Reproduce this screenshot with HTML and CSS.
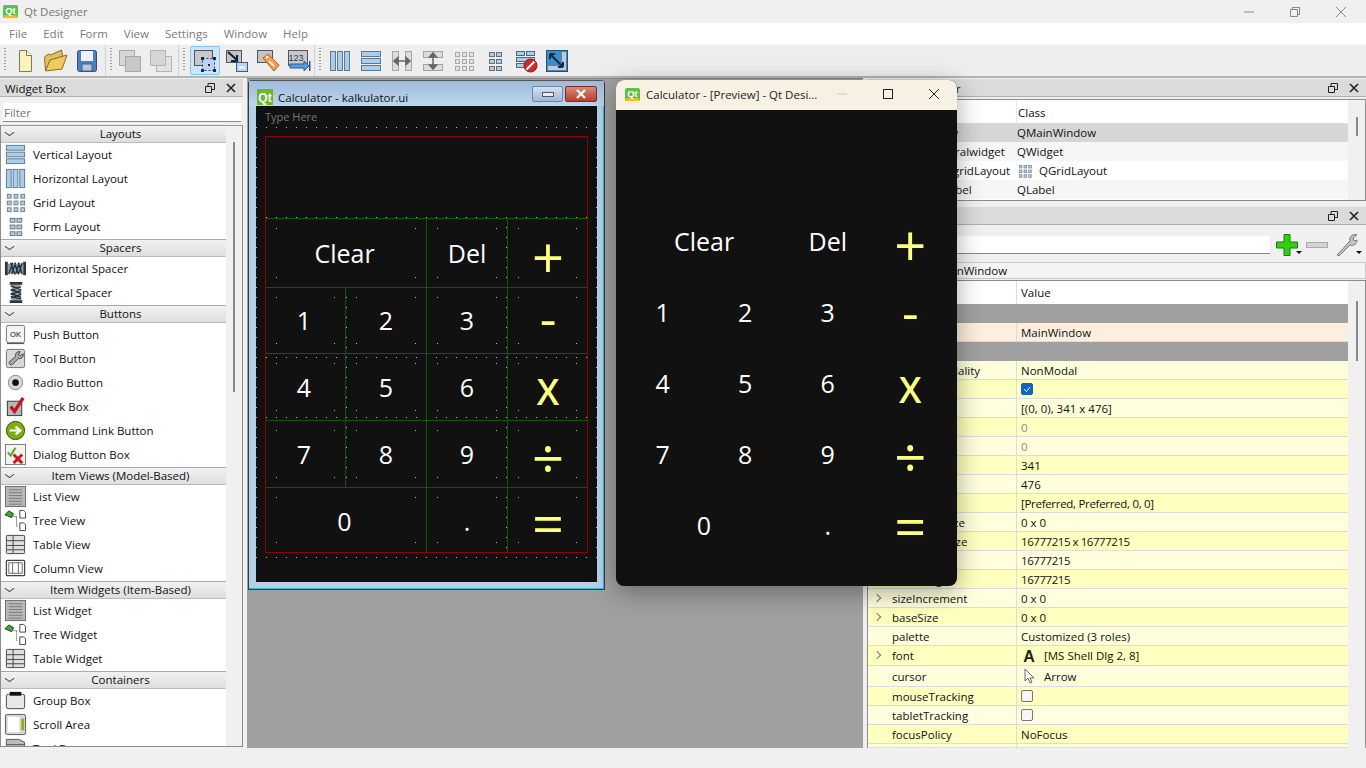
FILE: index.html
```html
<!DOCTYPE html>
<html lang="en">
<head>
  <meta charset="UTF-8">
  <title>Qt Designer</title>
  <link rel="stylesheet" href="styles.css">
</head>
<body>
<svg class="defs" width="0" height="0">
  <defs>
    <symbol id="i-qt" viewBox="0 0 16 16"><rect x="0" y="1" width="16" height="14" rx="2" fill="#5cc04a"/><rect x="1" y="12" width="14" height="3" fill="#f2c21a"/><text x="8" y="10.500" font-size="10" font-weight="bold" text-anchor="middle" fill="#fff" font-family="Liberation Sans">Qt</text></symbol>
    <symbol id="i-vbox" viewBox="0 0 24 24"><g fill="#a9cdea" stroke="#5d7890"><rect x="2.500" y="2.500" width="19" height="5"/><rect x="2.500" y="9.500" width="19" height="5"/><rect x="2.500" y="16.500" width="19" height="5"/></g></symbol>
    <symbol id="i-hbox" viewBox="0 0 24 24"><g fill="#a9cdea" stroke="#5d7890"><rect x="2.500" y="2.500" width="5" height="19"/><rect x="9.500" y="2.500" width="5" height="19"/><rect x="16.500" y="2.500" width="5" height="19"/></g></symbol>
    <symbol id="i-grid" viewBox="0 0 24 24"><g fill="#b6cadc" stroke="#6c8296"><rect x="3.500" y="3.500" width="4" height="4"/><rect x="10.500" y="3.500" width="4" height="4"/><rect x="17.500" y="3.500" width="4" height="4"/><rect x="3.500" y="10.500" width="4" height="4"/><rect x="10.500" y="10.500" width="4" height="4"/><rect x="17.500" y="10.500" width="4" height="4"/><rect x="3.500" y="17.500" width="4" height="4"/><rect x="10.500" y="17.500" width="4" height="4"/><rect x="17.500" y="17.500" width="4" height="4"/></g></symbol>
    <symbol id="i-grid-off" viewBox="0 0 24 24"><g fill="#e4e4e4" stroke="#a8a8a8"><rect x="3.500" y="3.500" width="4" height="4"/><rect x="10.500" y="3.500" width="4" height="4"/><rect x="17.500" y="3.500" width="4" height="4"/><rect x="3.500" y="10.500" width="4" height="4"/><rect x="10.500" y="10.500" width="4" height="4"/><rect x="17.500" y="10.500" width="4" height="4"/><rect x="3.500" y="17.500" width="4" height="4"/><rect x="10.500" y="17.500" width="4" height="4"/><rect x="17.500" y="17.500" width="4" height="4"/></g></symbol>
    <symbol id="i-form" viewBox="0 0 24 24"><g fill="#b6cadc" stroke="#5c7388"><rect x="6.500" y="3.500" width="5" height="4"/><rect x="13.500" y="3.500" width="5" height="4"/><rect x="6.500" y="10.500" width="5" height="4"/><rect x="13.500" y="10.500" width="5" height="4"/><rect x="6.500" y="17.500" width="5" height="4"/><rect x="13.500" y="17.500" width="5" height="4"/></g></symbol>
    <symbol id="i-hsplit" viewBox="0 0 24 24"><g fill="#dcdcdc" stroke="#a5a5a5"><rect x="2.500" y="2.500" width="6" height="19"/><rect x="15.500" y="2.500" width="6" height="19"/></g><path d="M5 12h14M8 8.500 4 12l4 3.500zM16 8.500l4 3.500-4 3.500z" fill="#666" stroke="#666" stroke-width="1.500"/></symbol>
    <symbol id="i-vsplit" viewBox="0 0 24 24"><g fill="#dcdcdc" stroke="#a5a5a5"><rect x="2.500" y="2.500" width="19" height="6"/><rect x="2.500" y="15.500" width="19" height="6"/></g><path d="M12 5v14M8.500 8 12 4l3.500 4zM8.500 16l3.500 4 3.500-4z" fill="#666" stroke="#666" stroke-width="1.500"/></symbol>
    <symbol id="i-break" viewBox="0 0 24 24"><g fill="#a9cdea" stroke="#50667c"><rect x="2.500" y="2.500" width="8" height="4"/><rect x="12.500" y="2.500" width="8" height="4"/><rect x="2.500" y="8.500" width="18" height="4"/><rect x="2.500" y="14.500" width="8" height="4"/></g><circle cx="16.500" cy="16.500" r="6.500" fill="#d32a2a" stroke="#8a1a1a"/><path d="M12.500 20.500 20.500 12.500" stroke="#fff" stroke-width="2"/></symbol>
    <symbol id="i-adjust" viewBox="0 0 24 24"><rect x="1.500" y="1.500" width="21" height="21" fill="#3d8dc4" stroke="#19557e"/><rect x="17" y="3" width="4" height="18" fill="#c8c8c8"/><rect x="3" y="17" width="18" height="4" fill="#c8c8c8"/><path d="M5 5 18 18M5 5v5M5 5h5M18 18v-5M18 18h-5" stroke="#0c2c50" stroke-width="2" fill="none"/></symbol>
    <symbol id="i-new" viewBox="0 0 24 24"><path d="M6.500 1.500h7l5 5v16h-12z" fill="#fdf3b8" stroke="#7a7a6a"/><path d="M13.500 1.500v5h5" fill="#fff" stroke="#7a7a6a"/></symbol>
    <symbol id="i-open" viewBox="0 0 24 24"><path d="M1.500 21 .5 8l4-3 2 1 11-5 1 6z" fill="#e5bf5a" stroke="#8a6a20"/><path d="M1.500 22 6 11l17-5-5 14z" fill="#f0cc60" stroke="#8a6a20"/></symbol>
    <symbol id="i-save" viewBox="0 0 24 24"><rect x="2.500" y="1.500" width="19" height="21" rx="2" fill="#4f80c0" stroke="#2f4f80"/><rect x="6" y="2" width="12" height="10" fill="#eef2f6"/><rect x="7" y="15" width="10" height="7" fill="#bcc8d4" stroke="#40608c"/></symbol>
    <symbol id="i-copy-off" viewBox="0 0 24 24"><g fill="#d6d6d6" stroke="#a8a8a8"><rect x="1.500" y="1.500" width="15" height="15"/><rect x="7.500" y="7.500" width="15" height="15" fill="#c8c8c8"/></g></symbol>
    <symbol id="i-copy2-off" viewBox="0 0 24 24"><g fill="#e2e2e2" stroke="#b4b4b4"><rect x="7.500" y="7.500" width="15" height="15"/><rect x="1.500" y="1.500" width="15" height="15" fill="#d6d6d6"/></g></symbol>
    <symbol id="i-edit" viewBox="0 0 24 24"><rect x="1.500" y="1.500" width="18" height="15" fill="#c8c8c8" stroke="#555"/><rect x="9.500" y="9.500" width="12" height="12" fill="#bcd2f2" stroke="#2a3c5c" stroke-dasharray="2 2"/><g fill="#1a2a44"><rect x="8" y="8" width="3" height="3"/><rect x="20" y="8" width="3" height="3"/><rect x="8" y="20" width="3" height="3"/><rect x="20" y="20" width="3" height="3"/><rect x="15" y="15" width="2" height="2"/></g></symbol>
    <symbol id="i-signal" viewBox="0 0 24 24"><rect x="1.500" y="1.500" width="15" height="12" fill="#c4c4c4" stroke="#555"/><rect x="11.500" y="13.500" width="11" height="9" fill="#bcd2f2" stroke="#3c5c84"/><rect x="14" y="17" width="6" height="3" fill="#e8f0f8"/><path d="M3 3 12 11M12 6v6H6" stroke="#12283e" stroke-width="2.200" fill="none"/></symbol>
    <symbol id="i-tab" viewBox="0 0 24 24"><rect x="1.500" y="1.500" width="15" height="12" fill="#c4c4c4" stroke="#555"/><path d="M7 9 12 5l11 11-5 6z" fill="#f4a04a" stroke="#b06020"/><circle cx="11" cy="8" r="1.300" fill="#fff"/><path d="M13 12l5 5" stroke="#fff" stroke-width="1.500"/></symbol>
    <symbol id="i-buddy" viewBox="0 0 24 24"><rect x="1.500" y="1.500" width="19" height="15" fill="#c8c8c8" stroke="#555"/><text x="9" y="12" font-size="9" text-anchor="middle" fill="#1a3c78" font-family="Liberation Sans">123</text><path d="M3 15h14v-3l5 5-5 5v-3H3z" fill="#5a9ae0" stroke="#2a5a9c"/><rect x="22" y="12" width="1.500" height="10" fill="#2a5a9c"/></symbol>
    <symbol id="i-hspacer" viewBox="0 0 24 24"><rect x="1" y="5" width="3" height="14" fill="#333"/><rect x="20" y="5" width="3" height="14" fill="#333"/><path d="M4 7h16v10H4z" fill="#8a9aa8"/><path d="M5 18 9 6M8 18l4-12M12 18l4-12M15 18l4-12M7 6l4 12M11 6l4 12M15 6l4 12" stroke="#1e2a34" stroke-width="1.300"/></symbol>
    <symbol id="i-vspacer" viewBox="0 0 24 24"><rect x="6" y="1" width="13" height="3" fill="#333"/><rect x="6" y="20" width="13" height="3" fill="#333"/><path d="M8 4h9v16H8z" fill="#8a9aa8"/><path d="M7 5 18 9M7 9l11 4M7 13l11 4M7 16l11 3M18 6 7 10M18 10 7 14M18 14 7 18" stroke="#1e2a34" stroke-width="1.300"/></symbol>
    <symbol id="i-ok" viewBox="0 0 24 24"><rect x="2.500" y="2.500" width="19" height="18" rx="2" fill="#f4f4f4" stroke="#707070"/><path d="M3 21.500h18" stroke="#444"/><text x="12" y="15" font-size="8" text-anchor="middle" fill="#111" font-family="Liberation Sans">OK</text></symbol>
    <symbol id="i-tool" viewBox="0 0 24 24"><rect x="2.500" y="2.500" width="19" height="19" rx="2" fill="#d8d8d8" stroke="#707070"/><path d="M17 5a4 4 0 0 0-5 5l-6 5a2 2 0 0 0 3 3l6-6a4 4 0 0 0 5-5l-3 2-2-1z" fill="#aaa" stroke="#444"/></symbol>
    <symbol id="i-radio" viewBox="0 0 24 24"><circle cx="12" cy="12" r="7.500" fill="#d8d8d8" stroke="#888"/><circle cx="12" cy="12" r="3.500" fill="#111"/></symbol>
    <symbol id="i-check" viewBox="0 0 24 24"><rect x="3.500" y="6.500" width="15" height="15" fill="#b8b8b8" stroke="#333"/><path d="M7 12l4 5 9-14" fill="none" stroke="#c8141e" stroke-width="3.500"/></symbol>
    <symbol id="i-cmd" viewBox="0 0 24 24"><circle cx="12" cy="12" r="9.500" fill="#7cae12" stroke="#2f4a08"/><path d="M6 12h10M12 8l5 4-5 4" fill="none" stroke="#fff" stroke-width="2.300"/></symbol>
    <symbol id="i-dialog" viewBox="0 0 24 24"><rect x="1.500" y="1.500" width="21" height="21" fill="#f2f2f2" stroke="#777"/><path d="M4 10l3 3 5-8" fill="none" stroke="#4cb030" stroke-width="2.200"/><path d="M10 12l9 9M19 12l-9 9" stroke="#d01818" stroke-width="3"/></symbol>
    <symbol id="i-list" viewBox="0 0 24 24"><rect x="1.500" y="1.500" width="21" height="21" fill="#b8b8b8" stroke="#6c6c6c"/><path d="M5 5h14M5 8h14M5 11h14M5 14h14M5 17h14M5 20h14" stroke="#7a7a7a"/></symbol>
    <symbol id="i-tree" viewBox="0 0 24 24"><path d="M1 6 5 2l5 3-2 4z" fill="#4aa040" stroke="#153c15"/><path d="M10 8h4M13 8v10M13 18h2" stroke="#333" stroke-dasharray="1 1"/><path d="M16.500 1.500h4l2 2v6h-6zM16.500 14.500h4l2 2v6h-6z" fill="#fff" stroke="#444"/></symbol>
    <symbol id="i-table" viewBox="0 0 24 24"><rect x="2.500" y="2.500" width="19" height="19" rx="1" fill="#e0e0e0" stroke="#444"/><path d="M3 8h18M3 13h18M3 17.500h18M9.500 3v18" stroke="#444"/></symbol>
    <symbol id="i-column" viewBox="0 0 24 24"><rect x="2.500" y="3.500" width="19" height="16" rx="1" fill="#fff" stroke="#444" stroke-width="1.300"/><path d="M9 6v11M15 6v11M5 6h14v11H5z" fill="none" stroke="#666"/></symbol>
    <symbol id="i-group" viewBox="0 0 24 24"><rect x="2.500" y="5.500" width="19" height="15" rx="2" fill="#e8e8e8" stroke="#444"/><rect x="6" y="3" width="12" height="4" fill="#111"/></symbol>
    <symbol id="i-scroll" viewBox="0 0 24 24"><rect x="1.500" y="1.500" width="21" height="21" rx="2" fill="#d8d8d8" stroke="#555"/><rect x="4" y="4" width="12" height="16" fill="#fff"/><rect x="18" y="6" width="3" height="12" fill="#8ab020"/></symbol>
    <symbol id="i-toolbox" viewBox="0 0 24 24"><path d="M2.500 2.500h13l6 3v16h-19z" fill="#bbb" stroke="#555"/><path d="M3 8h18M3 13h18" stroke="#555"/><rect x="3" y="14" width="10" height="8" fill="#8ab020"/></symbol>
    <symbol id="i-plus" viewBox="0 0 24 24"><path d="M9 1.500h6v7.500h7.500v6H15v7.500H9V15H1.500V9H9z" fill="#30d010" stroke="#108008"/></symbol>
    <symbol id="i-minus" viewBox="0 0 24 24"><rect x="1.500" y="9.500" width="21" height="5" fill="#d4d4d4" stroke="#aaa"/></symbol>
    <symbol id="i-wrench" viewBox="0 0 24 24"><path d="M2 22 15 8a5 5 0 0 1 7-6l-4 3 1 3 3-1a5 5 0 0 1-7 5L4 23z" fill="#c4c4c4" stroke="#777"/></symbol>
    <symbol id="i-font" viewBox="0 0 16 16"><text x="8" y="14" font-size="16" font-weight="bold" text-anchor="middle" fill="#222" font-family="Liberation Sans">A</text></symbol>
    <symbol id="i-cursor" viewBox="0 0 16 16"><path d="M4 1v12l3-3 2 5 2-1-2-4h4z" fill="#fff" stroke="#666"/></symbol>
  </defs>
</svg>

<div class="app">
  <header class="titlebar">
    <svg class="qt-logo"><use href="#i-qt"/></svg>
    <span class="app-name">Qt Designer</span>
    <div class="win-controls">
      <svg width="46" height="22" viewBox="0 0 46 22"><path d="M18 11h10" stroke="#888"/></svg>
      <svg width="46" height="22" viewBox="0 0 46 22"><path d="M18.500 8.500h7v7h-7zM20.500 8.500v-2h7v7h-2" fill="none" stroke="#888"/></svg>
      <svg width="46" height="22" viewBox="0 0 46 22"><path d="M18 6l10 10M28 6 18 16" stroke="#888"/></svg>
    </div>
  </header>

  <nav class="menubar">
    <span>File</span><span>Edit</span><span>Form</span><span>View</span><span>Settings</span><span>Window</span><span>Help</span>
  </nav>

  <div class="toolbar">
    <div class="tool-group g1">
      <span class="tool"><svg><use href="#i-new"/></svg></span>
      <span class="tool"><svg><use href="#i-open"/></svg></span>
      <span class="tool"><svg><use href="#i-save"/></svg></span>
    </div>
    <div class="tool-group g2">
      <span class="tool"><svg><use href="#i-copy-off"/></svg></span>
      <span class="tool"><svg><use href="#i-copy2-off"/></svg></span>
    </div>
    <div class="tool-group g3">
      <span class="tool active"><svg><use href="#i-edit"/></svg></span>
      <span class="tool"><svg><use href="#i-signal"/></svg></span>
      <span class="tool"><svg><use href="#i-tab"/></svg></span>
      <span class="tool"><svg><use href="#i-buddy"/></svg></span>
    </div>
    <div class="tool-group g4">
      <span class="tool"><svg><use href="#i-hbox"/></svg></span>
      <span class="tool"><svg><use href="#i-vbox"/></svg></span>
      <span class="tool"><svg><use href="#i-hsplit"/></svg></span>
      <span class="tool"><svg><use href="#i-vsplit"/></svg></span>
      <span class="tool"><svg><use href="#i-grid-off"/></svg></span>
      <span class="tool"><svg><use href="#i-form"/></svg></span>
      <span class="tool"><svg><use href="#i-break"/></svg></span>
      <span class="tool"><svg><use href="#i-adjust"/></svg></span>
    </div>
  </div>

  <main class="workspace">
    <aside class="dock widget-box">
      <div class="dock-title">
        <span>Widget Box</span>
        <svg class="float-ic" viewBox="0 0 10 10"><path d="M.5 3.500h6v6h-6zM3 3.500v-3h6.500v6h-3" fill="none" stroke="#222"/></svg>
        <svg class="close-ic" viewBox="0 0 10 10"><path d="M1 1l8 8M9 1 1 9" stroke="#222" stroke-width="1.600"/></svg>
      </div>
      <div class="filter">Filter</div>
      <div class="tree-frame">
        <div class="tree">
          <div class="cat">Layouts</div>
          <div class="item"><svg><use href="#i-vbox"/></svg>Vertical Layout</div>
          <div class="item"><svg><use href="#i-hbox"/></svg>Horizontal Layout</div>
          <div class="item"><svg><use href="#i-grid"/></svg>Grid Layout</div>
          <div class="item"><svg><use href="#i-form"/></svg>Form Layout</div>
          <div class="cat">Spacers</div>
          <div class="item"><svg><use href="#i-hspacer"/></svg>Horizontal Spacer</div>
          <div class="item"><svg><use href="#i-vspacer"/></svg>Vertical Spacer</div>
          <div class="cat">Buttons</div>
          <div class="item"><svg><use href="#i-ok"/></svg>Push Button</div>
          <div class="item"><svg><use href="#i-tool"/></svg>Tool Button</div>
          <div class="item"><svg><use href="#i-radio"/></svg>Radio Button</div>
          <div class="item"><svg><use href="#i-check"/></svg>Check Box</div>
          <div class="item"><svg><use href="#i-cmd"/></svg>Command Link Button</div>
          <div class="item"><svg><use href="#i-dialog"/></svg>Dialog Button Box</div>
          <div class="cat">Item Views (Model-Based)</div>
          <div class="item"><svg><use href="#i-list"/></svg>List View</div>
          <div class="item"><svg><use href="#i-tree"/></svg>Tree View</div>
          <div class="item"><svg><use href="#i-table"/></svg>Table View</div>
          <div class="item"><svg><use href="#i-column"/></svg>Column View</div>
          <div class="cat">Item Widgets (Item-Based)</div>
          <div class="item"><svg><use href="#i-list"/></svg>List Widget</div>
          <div class="item"><svg><use href="#i-tree"/></svg>Tree Widget</div>
          <div class="item"><svg><use href="#i-table"/></svg>Table Widget</div>
          <div class="cat">Containers</div>
          <div class="item"><svg><use href="#i-group"/></svg>Group Box</div>
          <div class="item"><svg><use href="#i-scroll"/></svg>Scroll Area</div>
          <div class="item"><svg><use href="#i-toolbox"/></svg>Tool Box</div>
        </div>
        <div class="tree-scroll"><div class="tree-thumb"></div></div>
      </div>
    </aside>

    <section class="mdi">
      <div class="sub-window">
        <div class="sub-title">
          <svg class="sub-logo" viewBox="0 0 16 16"><rect width="16" height="16" fill="#6cb82c"/><text x="8" y="12.500" font-size="12" font-weight="bold" text-anchor="middle" fill="#fff" font-family="Liberation Sans">Qt</text></svg>
          <span class="sub-name">Calculator - kalkulator.ui</span>
          <span class="sub-btn min"></span>
          <span class="sub-btn close">
            <svg viewBox="0 0 12 10" width="12" height="10"><path d="M2 1l8 8M10 1 2 9" stroke="#fff" stroke-width="2.200"/></svg>
          </span>
        </div>
        <div class="form">
          <div class="form-menu">Type Here</div>
          <div class="central">
            <div class="calc design">
              <div class="screen"></div>
              <div class="key wide edge"><span>Clear</span></div>
              <div class="key"><span>Del</span></div>
              <div class="key op plus"><span>+</span></div>
              <div class="key edge"><span>1</span></div>
              <div class="key"><span>2</span></div>
              <div class="key"><span>3</span></div>
              <div class="key op minus"><span>-</span></div>
              <div class="key edge"><span>4</span></div>
              <div class="key"><span>5</span></div>
              <div class="key"><span>6</span></div>
              <div class="key op times"><span>X</span></div>
              <div class="key edge"><span>7</span></div>
              <div class="key"><span>8</span></div>
              <div class="key"><span>9</span></div>
              <div class="key op div"><span>÷</span></div>
              <div class="key wide edge"><span>0</span></div>
              <div class="key"><span>.</span></div>
              <div class="key op eq"><span>=</span></div>
            </div>
          </div>
        </div>
      </div>
    </section>

    <aside class="dock right-dock">
      <div class="dock-title">
        <span>Object Inspector</span>
        <svg class="float-ic" viewBox="0 0 10 10"><path d="M.5 3.500h6v6h-6zM3 3.500v-3h6.500v6h-3" fill="none" stroke="#222"/></svg>
        <svg class="close-ic" viewBox="0 0 10 10"><path d="M1 1l8 8M9 1 1 9" stroke="#222" stroke-width="1.600"/></svg>
      </div>
      <div class="inspector">
        <div class="table-body">
          <div class="obj-row obj-head"><span>Object</span><span>Class</span></div>
          <div class="obj-row selected"><span class="lvl0">MainWindow</span><span>QMainWindow</span></div>
          <div class="obj-row alt"><span class="lvl1">centralwidget</span><span>QWidget</span></div>
          <div class="obj-row"><span class="lvl2">gridLayout</span><span class="with-ic"><svg><use href="#i-grid"/></svg>QGridLayout</span></div>
          <div class="obj-row alt"><span class="lvl3">label</span><span>QLabel</span></div>
        </div>
        <div class="side-scroll short"><div class="side-thumb"></div></div>
      </div>

      <div class="dock-title second">
        <span>Property Editor</span>
        <svg class="float-ic" viewBox="0 0 10 10"><path d="M.5 3.500h6v6h-6zM3 3.500v-3h6.500v6h-3" fill="none" stroke="#222"/></svg>
        <svg class="close-ic" viewBox="0 0 10 10"><path d="M1 1l8 8M9 1 1 9" stroke="#222" stroke-width="1.600"/></svg>
      </div>
      <div class="prop-tools">
        <div class="prop-filter"></div>
        <span class="prop-tool"><svg><use href="#i-plus"/></svg><i class="drop"></i></span>
        <span class="prop-tool off"><svg><use href="#i-minus"/></svg></span>
        <span class="prop-tool"><svg><use href="#i-wrench"/></svg><i class="drop"></i></span>
      </div>
      <div class="obj-class">MainWindow</div>
      <div class="props">
        <div class="table-body">
          <div class="prop head"><span>Property</span><span>Value</span></div>
          <div class="prop section"></div>
          <div class="prop peach"><span>objectName</span><span>MainWindow</span></div>
          <div class="prop section"></div>
          <div class="prop"><span>windowModality</span><span>NonModal</span></div>
          <div class="prop y"><span>enabled</span><span><i class="box on"><svg viewBox="0 0 12 12" width="12" height="12"><path d="M3 6l2.500 2.500L9 4" fill="none" stroke="#fff"/></svg></i></span></div>
          <div class="prop"><span>geometry</span><span>[(0, 0), 341 x 476]</span></div>
          <div class="prop y sub"><span>X</span><span>0</span></div>
          <div class="prop sub"><span>Y</span><span>0</span></div>
          <div class="prop y"><span>Width</span><span>341</span></div>
          <div class="prop"><span>Height</span><span>476</span></div>
          <div class="prop y"><span>sizePolicy</span><span class="tight">[Preferred, Preferred, 0, 0]</span></div>
          <div class="prop"><span>minimumSize</span><span>0 x 0</span></div>
          <div class="prop y"><span>maximumSize</span><span class="tighter">16777215 x 16777215</span></div>
          <div class="prop nested"><span>Width</span><span class="tighter">16777215</span></div>
          <div class="prop y nested"><span>Height</span><span class="tighter">16777215</span></div>
          <div class="prop"><i class="chev"></i><span>sizeIncrement</span><span>0 x 0</span></div>
          <div class="prop y"><i class="chev"></i><span>baseSize</span><span>0 x 0</span></div>
          <div class="prop"><span>palette</span><span>Customized (3 roles)</span></div>
          <div class="prop y tall"><i class="chev"></i><span>font</span><span class="with-ic"><svg><use href="#i-font"/></svg>[MS Shell Dlg 2, 8]</span></div>
          <div class="prop taller"><span>cursor</span><span class="with-ic"><svg><use href="#i-cursor"/></svg>Arrow</span></div>
          <div class="prop y"><span>mouseTracking</span><span><i class="box"></i></span></div>
          <div class="prop"><span>tabletTracking</span><span><i class="box"></i></span></div>
          <div class="prop y"><span>focusPolicy</span><span>NoFocus</span></div>
          <div class="prop stub"><span></span><span></span></div>
        </div>
        <div class="side-scroll"><div class="side-thumb long"></div></div>
      </div>
    </aside>
  </main>

  <footer class="statusbar"></footer>

  <div class="preview">
    <div class="preview-title">
      <svg class="preview-logo"><use href="#i-qt"/></svg>
      <span class="preview-name">Calculator - [Preview] - Qt Desi...</span>
      <div class="preview-controls">
        <svg width="46" height="30" viewBox="0 0 46 30"><path d="M18 14h10" stroke="#ccc"/></svg>
        <svg width="46" height="30" viewBox="0 0 46 30"><rect x="18.500" y="9.500" width="9" height="9" fill="none" stroke="#222"/></svg>
        <svg width="46" height="30" viewBox="0 0 46 30"><path d="M18 9l10 10M28 9 18 19" stroke="#222"/></svg>
      </div>
    </div>
    <div class="calc live">
      <div class="screen"></div>
      <div class="key wide"><span>Clear</span></div>
      <div class="key"><span>Del</span></div>
      <div class="key op plus"><span>+</span></div>
      <div class="key"><span>1</span></div>
      <div class="key"><span>2</span></div>
      <div class="key"><span>3</span></div>
      <div class="key op minus"><span>-</span></div>
      <div class="key"><span>4</span></div>
      <div class="key"><span>5</span></div>
      <div class="key"><span>6</span></div>
      <div class="key op times"><span>X</span></div>
      <div class="key"><span>7</span></div>
      <div class="key"><span>8</span></div>
      <div class="key"><span>9</span></div>
      <div class="key op div"><span>÷</span></div>
      <div class="key wide"><span>0</span></div>
      <div class="key"><span>.</span></div>
      <div class="key op eq"><span>=</span></div>
    </div>
  </div>
</div>
</body>
</html>
```

FILE: styles.css
```css
* {
  box-sizing: border-box;
  margin: 0;
  padding: 0;
}

body {
  font-family: "Open Sans", "Noto Sans", sans-serif;
  font-size: 11.5px;
  color: #111;
  background: #f0f0f0;
  overflow: hidden;
}

.defs {
  display: block;
  height: 0;
}

.app {
  position: relative;
  width: 1366px;
  height: 768px;
  display: grid;
  grid-template-rows: 23px 21px 34px 670px 20px;
  background: #f0f0f0;
}

/* title + menu */
.titlebar {
  display: flex;
  align-items: center;
  padding-left: 3px;
  color: #777;
}

.qt-logo {
  width: 15px;
  height: 15px;
}

.app-name {
  margin-left: 6px;
}

.win-controls {
  margin-left: auto;
  display: flex;
  padding-right: 2px;
}

.menubar {
  display: flex;
  align-items: center;
  gap: 16px;
  padding-left: 9px;
  background: #fff;
  color: #7a7a7a;
}

/* toolbar */
.toolbar {
  display: flex;
  background: #eee;
  border-top: 1px solid #f7f7f7;
  border-bottom: 2px solid #b4b4b4;
  align-items: stretch;
}

.tool-group {
  display: flex;
  align-items: center;
  border-right: 1px solid #d0d0d0;
  background-image: repeating-linear-gradient(#999 0 1px, transparent 1px 3px);
  background-size: 2px 24px;
  background-repeat: no-repeat;
  background-position: 4px 3px;
}

.g1 {
  width: 106px;
  padding-left: 9px;
}

.g2 {
  width: 73px;
  padding-left: 8px;
}

.g3 {
  width: 136px;
  padding-left: 11px;
}

.g4 {
  padding-left: 9px;
  border-right: 0;
}

.tool {
  width: 31px;
  height: 29px;
  display: flex;
  align-items: center;
  justify-content: center;
}

.tool svg {
  width: 24px;
  height: 24px;
}

.tool.active {
  width: 30px;
  margin-right: 1px;
  background: #cce4f7;
  border: 1px solid #8cc4ee;
  border-radius: 2px;
}

/* main area */
.workspace {
  display: grid;
  grid-template-columns: 243px 616px 499px;
  gap: 4px;
}

.dock {
  display: flex;
  flex-direction: column;
  padding-top: 1px;
}

.dock-title {
  height: 18px;
  flex: none;
  display: flex;
  align-items: center;
  padding: 1px 0 0 5px;
  background: #dbdbdb;
  border-bottom: 1px solid #b0b0b0;
}

.dock-title span {
  flex: 1;
}

.float-ic,
.close-ic {
  width: 10px;
  height: 10px;
  margin-right: 11px;
}

.close-ic {
  margin-right: 7px;
}

.filter {
  height: 19px;
  margin: 6px 2px 3px 3px;
  flex: none;
  padding-left: 1px;
  background: #fff;
  border-bottom: 1px solid #8a8a8a;
  color: #777;
  line-height: 20px;
}

.tree-frame {
  height: 622px;
  flex: none;
  display: flex;
  overflow: hidden;
  background: #f0f0f0;
  border: 1px solid #8c8c8c;
  border-top: 1px solid #999;
}

.tree {
  width: 225px;
  flex: none;
  margin-top: -1px;
  background: #fff;
}

.cat {
  height: 18px;
  padding-left: 14px;
  text-align: center;
  line-height: 16px;
  background: linear-gradient(#f2f2f2, #dedede);
  border-top: 1px solid #aaa;
  border-bottom: 1px solid #bbb;
  position: relative;
}

.cat::before {
  content: "";
  position: absolute;
  left: 5px;
  top: 3px;
  width: 6px;
  height: 6px;
  border-right: 1.500px solid #333;
  border-bottom: 1.500px solid #333;
  transform: scaleY(0.7) rotate(45deg);
}

.item {
  height: 24px;
  display: flex;
  align-items: center;
  gap: 6px;
  padding: 0 0 2px 3px;
  white-space: nowrap;
}

.item svg {
  width: 23px;
  height: 23px;
  flex: none;
}

.tree-scroll {
  flex: 1;
  padding: 16px 0 0 7px;
}

.tree-thumb {
  width: 2px;
  height: 250px;
  background: #8a8a8a;
}

/* central mdi */
.mdi {
  background: #a0a0a0;
  padding: 1px 0 0 1px;
  border-top: 1px solid #8a8a8a;
}

.sub-window {
  width: 357px;
  height: 510px;
  padding: 0 7px 7px;
  display: flex;
  flex-direction: column;
  background: #b6d0ea;
  border: 1px solid #3a3a3a;
  border-top-color: #555;
  box-shadow: inset -1px -1px 0 #2fb8d8;
  border-radius: 4px 4px 0 0;
}

.sub-title {
  height: 25px;
  flex: none;
  margin: 0 -7px;
  padding: 5px 7px 0 8px;
  display: flex;
  align-items: flex-start;
  background: linear-gradient(#9fbbda, #bed6ee);
}

.sub-logo {
  width: 16px;
  height: 16px;
  flex: none;
  margin-top: 3px;
}

.sub-name {
  margin: 4px 0 0 5px;
  flex: 1;
}

.sub-btn {
  height: 16px;
  border-radius: 2px;
  display: flex;
  align-items: center;
  justify-content: center;
}

.sub-btn.min {
  width: 31px;
  margin-right: 2px;
  background: linear-gradient(#d3e2f0, #9db8d4);
  border: 1px solid #6d85a0;
}

.sub-btn.min::before {
  content: "";
  width: 10px;
  height: 3px;
  background: #eee;
  border: 1px solid #556;
}

.sub-btn.close {
  width: 32px;
  background: linear-gradient(#d88a7c, #b8402e);
  border: 1px solid #7c2e24;
}

.form {
  width: 341px;
  height: 476px;
  background: #111;
  color: #fff;
}

.form-menu {
  height: 21px;
  padding-left: 9px;
  color: #777;
  font-size: 11px;
  line-height: 21px;
}

.central {
  height: 431px;
  padding: 9px 9px 0;
  background-image: conic-gradient(at 1px 1px, transparent 75%, #b8b8b8 0);
  background-size: 10px 10px;
}

/* calculator grid, shared by form and preview */
.calc {
  display: grid;
  color: #fff;
}

.calc .wide {
  grid-column: span 2;
}

.screen {
  grid-column: 1 / -1;
}

.key {
  display: flex;
  align-items: center;
  justify-content: center;
  font-size: 25px;
  min-width: 0;
}

.key span {
  line-height: 1;
}

.key.op {
  color: #ffff80;
  font-size: 56px;
}

.key.op span {
  line-height: 0.6;
}

.key.plus span {
  transform: translateY(4px);
}

.key.minus {
  font-size: 52px;
}

.key.minus span {
  transform: translateY(-4px);
}

.key.times {
  font-size: 36px;
  font-weight: 600;
}

.key.times span {
  transform: translateY(5px);
}

.key.div span {
  transform: translateY(4px);
}

.key.eq span {
  transform: translateY(2px);
}

.design {
  width: 323px;
  height: 417px;
  border: 1px solid #8b0000;
  grid-template-columns: 79px 81px 81px 80px;
  grid-template-rows: 81px 69px 66px 67px 67px 65px;
}

.design .screen {
  margin-bottom: 2px;
  background: #111;
}

/* the buttons cover the form dots, only their four corner dots stay */
.design .key {
  border-top: 1px solid #0b5a0b;
  border-left: 1px solid #0b5a0b;
  padding: 1px;
  background-color: #111;
  background-clip: content-box;
  background-image:
    linear-gradient(#b8b8b8, #b8b8b8),
    linear-gradient(#b8b8b8, #b8b8b8),
    linear-gradient(#b8b8b8, #b8b8b8),
    linear-gradient(#b8b8b8, #b8b8b8);
  background-size: 1px 1px;
  background-repeat: no-repeat;
  background-position:
    10px 9px,
    calc(100% - 10px) 9px,
    10px calc(100% - 9px),
    calc(100% - 10px) calc(100% - 9px);
}

.design .key.edge {
  border-left: 0;
  padding-left: 0;
  padding-right: 3px;
}

.design .key.op {
  padding-right: 0;
}

/* row above the line at y 420 still shows its dots */
.design .key:nth-child(n+9):nth-child(-n+12) {
  padding-top: 4px;
  padding-bottom: 4px;
}

.design .key:nth-child(n+17) {
  padding-top: 3px;
}

/* preview window */
.preview {
  position: absolute;
  left: 616px;
  top: 80px;
  width: 341px;
  height: 506px;
  background: #111;
  border-radius: 8px;
  overflow: hidden;
  box-shadow: 0 6px 26px rgba(0, 0, 0, 0.35);
}

.preview-title {
  height: 30px;
  display: flex;
  align-items: center;
  padding: 0 0 1px 9px;
  background: #f6f1e2;
  color: #222;
}

.preview-logo {
  width: 15px;
  height: 15px;
  flex: none;
}

.preview-name {
  margin-left: 6px;
  white-space: nowrap;
}

.preview-controls {
  margin-left: auto;
  display: flex;
}

.live {
  padding: 96px 5.500px 24px;
  grid-template-columns: repeat(4, 82.5px);
  grid-template-rows: repeat(5, 71px);
}

.live .screen {
  display: none;
}

.live .plus span {
  transform: translateY(3px);
}

.live .minus span {
  transform: translateY(-2px);
}

.live .times span {
  transform: translateY(6px);
}

.live .div span {
  transform: translateY(2px);
}

.live .eq span {
  transform: translateY(0);
}

/* right side */
.right-dock {
  min-width: 0;
}

.inspector {
  height: 102px;
  flex: none;
  margin-top: 2px;
  display: flex;
  border: 1px solid #8c8c8c;
  background: #f0f0f0;
}

.table-body {
  width: 480px;
  flex: none;
  background: #fff;
  overflow: hidden;
}

.obj-row {
  height: 19px;
  display: grid;
  grid-template-columns: 148px 1fr;
  align-items: center;
  white-space: nowrap;
}

.obj-head {
  height: 23px;
  padding-top: 1px;
  background: #fff;
}

.obj-row > span:last-child {
  padding-left: 1px;
}

.obj-head > span:last-child {
  border-left: 1px solid #e8e8e8;
  height: 100%;
  line-height: 23px;
}

.selected {
  background: #d6d6d6;
  border-radius: 2px;
}

.alt {
  background: #f6f6f6;
}

.lvl0 {
  padding-left: 20px;
}

.lvl1 {
  padding-left: 64px;
}

.lvl2 {
  padding-left: 85px;
}

.lvl3 {
  padding-left: 78px;
}

.with-ic {
  display: flex;
  align-items: center;
  gap: 6px;
}

.obj-row .with-ic svg {
  width: 16px;
  height: 16px;
}

.side-scroll {
  flex: 1;
  padding: 20px 0 0 8px;
}

.side-scroll.short {
  padding-top: 17px;
}

.side-thumb {
  width: 2px;
  height: 19px;
  background: #8a8a8a;
}

.side-thumb.long {
  height: 60px;
}

.dock-title.second {
  margin-top: 6px;
}

.prop-tools {
  height: 37px;
  flex: none;
  display: flex;
  align-items: center;
  padding-top: 3px;
}

.prop-filter {
  width: 403px;
  height: 18px;
  background: #fff;
  border-bottom: 1px solid #8a8a8a;
  margin-right: 5px;
}

.prop-tool {
  width: 30px;
  height: 24px;
  position: relative;
  display: flex;
  justify-content: flex-start;
  align-items: center;
}

.prop-tool svg {
  width: 24px;
  height: 24px;
}

.drop {
  position: absolute;
  right: 3px;
  bottom: 0;
  border: 3px solid transparent;
  border-top-color: #111;
}

.obj-class {
  height: 17px;
  flex: none;
  margin-bottom: 1px;
  padding-left: 69px;
  line-height: 16px;
  background: #f4f4f4;
  border: 1px solid #c8c8c8;
}

.props {
  flex: 1;
  display: flex;
  border: 1px solid #8c8c8c;
  min-height: 0;
  background: #f0f0f0;
}

.prop {
  height: 19px;
  position: relative;
  display: grid;
  grid-template-columns: 149px 1fr;
  align-items: center;
  background: #ffffdc;
  border-bottom: 1px solid #dcdcdc;
  white-space: nowrap;
}

.prop > span {
  height: 100%;
  display: flex;
  align-items: center;
}

.prop > span:first-of-type {
  padding-left: 24px;
  border-right: 1px solid #dcdcdc;
}

.prop > span:last-child {
  padding-left: 4px;
}

.prop.nested > span:first-of-type {
  padding-left: 50px;
}

.tight {
  letter-spacing: -0.3px;
}

.tighter {
  letter-spacing: -0.45px;
}

.prop.y {
  background: #ffffbf;
}

.prop.head {
  height: 23px;
  background: #fff;
  border-bottom: 0;
}

.prop.section {
  background: #a0a0a0;
  border: 0;
  display: block;
}

.prop.peach {
  background: #fdeede;
}

.prop.tall {
  height: 20px;
}

.prop.taller {
  height: 21px;
}

.prop.stub {
  height: 4px;
}

.prop.sub > span:last-child {
  color: #888;
}

.prop .with-ic {
  gap: 7px;
}

.prop .with-ic svg {
  width: 16px;
  height: 16px;
}

.chev {
  position: absolute;
  left: 6px;
  top: 6px;
  width: 6px;
  height: 6px;
  border-top: 1.500px solid #777;
  border-right: 1.500px solid #777;
  transform: rotate(45deg);
}

.box {
  display: flex;
  width: 12px;
  height: 12px;
  background: #f6f6f6;
  border: 1px solid #777;
  border-radius: 2px;
}

.box.on {
  background: #0f65c0;
  border-color: #0f65c0;
}

.box svg {
  margin: -1px;
}

.statusbar {
  background: #f0f0f0;
}
```
